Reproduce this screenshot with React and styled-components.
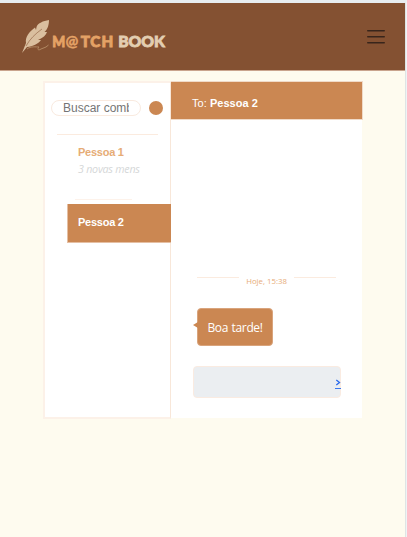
import React from 'react';
import styled, { createGlobalStyle } from 'styled-components';

const GlobalStyle = createGlobalStyle`
  * { box-sizing: border-box; }
  body { margin: 0; background: #fefbef; overflow: hidden; }
  button, input { font: inherit; }
`;

const Page = styled.div`
  height: 537px;
  border-top: 3px solid #e8edf0;
  border-right: 1px solid #eff3f5;
  background: #fefbef;
  font-family: "Open Sans", sans-serif;
`;

const Frame = styled.div`
  height: 534px;
  border-right: 1px solid #dfe4e5;
`;

const Header = styled.header`
  display: flex;
  align-items: flex-start;
  justify-content: space-between;
  height: 68px;
  padding: 0 20px 0 20px;
  background: #845132;
  border-bottom: 1px solid #c9a48e;
`;

const Logo = styled.svg`
  display: block;
  width: 150px;
  height: 60px;
  overflow: visible;
`;

const LogoText = styled.text`
  font-family: Lato, sans-serif;
  font-size: 15.2px;
  font-weight: 900;
  fill: ${(p) => p.$color};
  stroke: ${(p) => p.$color};
  stroke-width: 0.8px;
`;

const LogoAt = styled.tspan`
  stroke-width: 0.3px;
`;

const MenuButton = styled.button`
  width: 18px;
  height: 16px;
  margin: 26px 0 0;
  padding: 0;
  border: 0;
  background: none;
`;

const MenuIcon = styled.svg`
  display: block;
`;

const Messenger = styled.main`
  display: grid;
  grid-template-columns: 128px 192px;
  height: 338px;
  margin: 10px 0 0 43px;
`;

const Sidebar = styled.aside`
  background: #fff;
  border: 2px solid #fcf1e8;
  border-right: 1px solid #f8e7d9;
`;

const Search = styled.form`
  display: flex;
  align-items: center;
  gap: 8px;
  height: 16px;
  margin: 17px 0 0 6px;
`;

const SearchInput = styled.input`
  width: 90px;
  height: 16px;
  padding: 0 11px;
  border: 1px solid #f9eadf;
  border-radius: 8px;
  background: #fff;
  outline: 0;
  font-family: "Liberation Sans", sans-serif;
  font-size: 12px;
  line-height: 14px;
  &::placeholder { color: #757575; opacity: 1; }
`;

const SearchButton = styled.button`
  width: 14px;
  height: 14px;
  padding: 0;
  border: 0;
  border-radius: 50%;
  background: #cb8752;
`;

const Divider = styled.hr`
  width: ${(p) => p.$width}px;
  height: 1px;
  margin: ${(p) => p.$margin};
  border: 0;
  background: ${(p) => p.$color || '#fbebdf'};
`;

const Person = styled.div`
  height: ${(p) => (p.$active ? 39 : 53)}px;
  margin: ${(p) => (p.$active ? '4px -1px 0 22px' : '0 0 0 22px')};
  padding: ${(p) => (p.$active ? '11px 0 0 10px' : '10px 0 0 11px')};
  border: ${(p) => (p.$active ? '1px solid #e5bfa3' : '0')};
  border-width: ${(p) => (p.$active ? '0 0 1px 1px' : '0')};
  background: ${(p) => (p.$active ? '#cb8752' : '#fff')};
  color: ${(p) => (p.$active ? '#fff' : '#e6ac76')};
`;

const Name = styled.div`
  font: bold 11px/15px "Liberation Sans", sans-serif;
  letter-spacing: -0.25px;
`;

const Preview = styled.div`
  margin-top: 1px;
  color: #d5d7d8;
  font-size: 10.7px;
  font-style: italic;
  letter-spacing: -0.24px;
  line-height: 16px;
  white-space: nowrap;
`;

const Chat = styled.section`
  width: 191px;
  height: 337px;
  background: #fff;
`;

const ChatHeader = styled.header`
  width: 192px;
  height: 39px;
  padding: 14px 0 0 21px;
  border: 1px solid #f0dac8;
  border-left: 0;
  background: #cb8752;
  color: #fff;
  font: 11px/14px "Liberation Sans", sans-serif;
  letter-spacing: 0.04px;
`;

const DateLine = styled.div`
  display: flex;
  justify-content: space-between;
  align-items: flex-start;
  width: 139px;
  height: 14px;
  margin: 154px 0 0 26px;
  color: #e7ac78;
  font-size: 7.8px;
  line-height: 14px;
`;

const Bubble = styled.div`
  position: relative;
  width: 76px;
  height: 38px;
  margin: 20px 0 0 26px;
  border: 1px solid #d9a47c;
  border-radius: 4px;
  background: #cb8752;
  color: #fff;
  font-size: 12px;
  letter-spacing: -0.35px;
  word-spacing: 0.8px;
  line-height: 38px;
  text-align: center;
  &::before {
    content: "";
    position: absolute;
    left: -5px;
    top: 13px;
    border: 3px solid transparent;
    border-right: 5px solid #cb8752;
    border-left: 0;
  }
`;

const Composer = styled.form`
  display: flex;
  justify-content: flex-end;
  width: 148px;
  height: 32px;
  margin: 20px 0 0 22px;
  border: 1px solid #faebe1;
  border-radius: 4px;
  background: #ebeef1;
`;

const Send = styled.a`
  width: 6px;
  height: 10px;
  margin: 12px -1px 0 0;
  border-bottom: 1px solid #3c79ee;
`;

const SendIcon = styled.svg`
  display: block;
`;

export default function App() {
  return (
    <Page>
      <GlobalStyle />
      <Frame>
        <Header>
          <Logo viewBox="0 0 150 60" role="img" aria-label="M@TCH BOOK">
            <path fill="#dabf9f" d="M29 17C23 18 18 20 16.5 24L16 27 15 24.5C9 29 5 34 6 40L2 50 7 44C13 43.5 18 41 21 37L18 37C23 35 26 32 27 29L24.5 29C28 26 29 21 29 17Z" />
            <path d="M22 26C15 31 10 36 6 43" fill="none" stroke="#845132" strokeWidth=".55" />
            <path d="M7 46C11 43 16 44 19 44C17 46 18 48 21 46L26 44 28.5 42" fill="none" stroke="#b58d68" strokeWidth=".9" />
            <LogoText y="44" $color="#e4a266">
              <tspan x="32.3" textLength="13" lengthAdjust="spacingAndGlyphs">M</tspan>
              <LogoAt x="45.6" y="42.7">@</LogoAt>
              <tspan x="60.8" y="44">T</tspan>
              <tspan x="70.2">C</tspan>
              <tspan x="81.4">H</tspan>
            </LogoText>
            <LogoText x="98.2" y="44" textLength="46.8" lengthAdjust="spacingAndGlyphs" $color="#e3ceb1">BOOK</LogoText>
          </Logo>
          <MenuButton aria-label="Menu">
            <MenuIcon width="18" height="16" viewBox="0 0 18 16">
              <path d="M.7 1.7H17.3M.7 7.7H17.3M.7 13.7H17.3" stroke="#38251b" strokeWidth="1.35" strokeLinecap="round" />
            </MenuIcon>
          </MenuButton>
        </Header>
        <Messenger>
          <Sidebar>
            <Search>
              <SearchInput placeholder="Buscar combinações" />
              <SearchButton type="button" aria-label="Buscar" />
            </Search>
            <Divider $width={101} $margin="18px 0 0 12px" />
            <Person>
              <Name>Pessoa 1</Name>
              <Preview>3 novas mens</Preview>
            </Person>
            <Divider $width={57} $margin="11px 0 0 30px" $color="#fdf2ea" />
            <Person $active>
              <Name>Pessoa 2</Name>
            </Person>
          </Sidebar>
          <Chat>
            <ChatHeader>To: <b>Pessoa 2</b></ChatHeader>
            <DateLine>
              <Divider $width={42} $margin="3px 0 0" />
              <span>Hoje, 15:38</span>
              <Divider $width={42} $margin="3px 0 0" />
            </DateLine>
            <Bubble>Boa tarde!</Bubble>
            <Composer>
              <Send href="#" aria-label="Enviar">
                <SendIcon width="6" height="8" viewBox="0 0 6 8">
                  <path d="M1.3 1 4.5 3.5 1.3 6" fill="none" stroke="#2868ec" strokeWidth="1.3" />
                </SendIcon>
              </Send>
            </Composer>
          </Chat>
        </Messenger>
      </Frame>
    </Page>
  );
}
